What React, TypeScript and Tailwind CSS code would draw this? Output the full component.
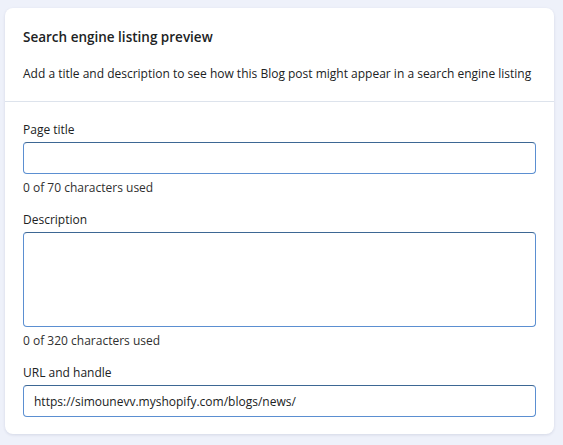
import { useState } from "react";

const font = { fontFamily: '"Open Sans", "Noto Sans", Arial, sans-serif' };

function Field({
  label,
  help,
  value,
  onChange,
  multiline,
}: {
  label: string;
  help?: string;
  value: string;
  onChange: (v: string) => void;
  multiline?: boolean;
}) {
  const box =
    "w-full rounded-[4px] border border-[#5b8fd1] border-t-[#3d6794] bg-white px-[10px] text-[12px] text-[#202223] outline-none";
  return (
    <div className="flex flex-col">
      <label className="text-[12px] leading-5 text-[#202223]">{label}</label>
      {multiline ? (
        <textarea
          value={value}
          onChange={(e) => onChange(e.target.value)}
          className={`${box} mt-[2px] h-[95px] resize-none py-2`}
        />
      ) : (
        <input
          value={value}
          onChange={(e) => onChange(e.target.value)}
          className={`${box} mt-[2px] h-8`}
        />
      )}
      {help && <p className="mt-[4px] text-[12px] leading-5 text-[#303030]">{help}</p>}
    </div>
  );
}

export default function App() {
  const [title, setTitle] = useState("");
  const [desc, setDesc] = useState("");
  const [url, setUrl] = useState("https://simounevv.myshopify.com/blogs/news/");

  return (
    <div className="min-h-screen bg-[#eef1fa] pl-[5px] pr-[9px] pt-2" style={font}>
      <div className="rounded-lg bg-white shadow-[0_1px_3px_rgba(30,40,90,0.12)]">
        {/* Header */}
        <div className="border-b border-[#dde3ec] px-[18px] pb-[17px] pt-[19px]">
          <h2 className="text-[13.5px] font-semibold leading-5 text-[#202223]">Search engine listing preview</h2>
          <p className="mt-[17px] text-[12px] leading-5 text-[#202223]">
            Add a title and description to see how this Blog post might appear in a search engine listing
          </p>
        </div>

        {/* Fields */}
        <div className="flex flex-col gap-3 px-[18px] pb-[17px] pt-[18px]">
          <Field
            label="Page title"
            help={`${title.length} of 70 characters used`}
            value={title}
            onChange={setTitle}
          />
          <Field
            label="Description"
            help={`${desc.length} of 320 characters used`}
            value={desc}
            onChange={setDesc}
            multiline
          />
          <Field label="URL and handle" value={url} onChange={setUrl} />
        </div>
      </div>
    </div>
  );
}
